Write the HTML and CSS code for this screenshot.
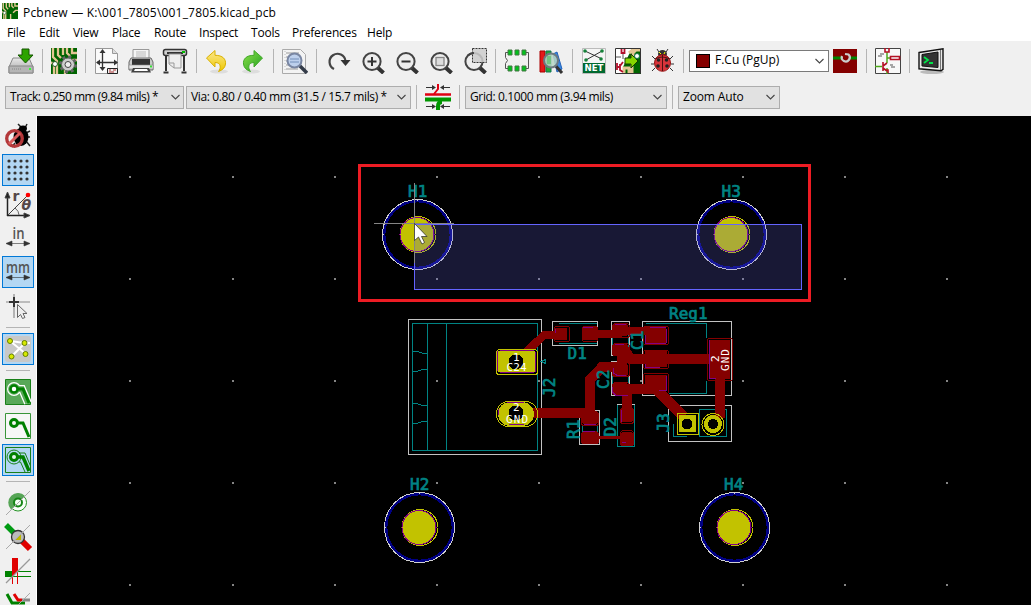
FILE: index.html
```html
<!DOCTYPE html>
<html lang="en">
<head>
<meta charset="utf-8">
<title>Pcbnew</title>
<link rel="stylesheet" href="styles.css">
</head>
<body>
<svg class="defs" width="0" height="0" aria-hidden="true">
  <defs>
    <linearGradient id="gray" x1="0" y1="0" x2="0" y2="1"><stop offset="0" stop-color="#e8e8e8"/><stop offset="1" stop-color="#a5a5a5"/></linearGradient>
    <linearGradient id="green" x1="0" y1="0" x2="1" y2="1"><stop offset="0" stop-color="#8ee04a"/><stop offset="1" stop-color="#20a020"/></linearGradient>
    <linearGradient id="gold" x1="0" y1="0" x2="0" y2="1"><stop offset="0" stop-color="#fbe78e"/><stop offset="1" stop-color="#eec800"/></linearGradient>
    <g id="lens"><path d="M18 19L24.500 25" stroke="#333" stroke-width="4"/><circle cx="13" cy="13.500" r="8.600" fill="#ededed" stroke="#444" stroke-width="2"/></g>
    <g id="board">
      <path fill="#006400" d="M0 0h26v26H0z"/>
      <path d="M2 0v9l4 4v13M7 0v7l3 3M12 0v7M16 0v5l3 3M21 0v5h5M0 14l3 3v9M14 26v-8M26 12h-4l-4 4" stroke="#e3c693" stroke-width="2.300" fill="none"/>
      <circle cx="4" cy="16" r="2.500" fill="#fff" stroke="#245c24"/>
    </g>
    <g id="hole">
      <circle r="35" fill="none" stroke="#d0d0d0"/>
      <circle r="33.300" fill="none" stroke="#000084" stroke-width="2.400"/>
      <circle cx=".5" r="18" fill="none" stroke="#c2c200"/>
      <circle cx="-.5" r="17" fill="#c2c200" stroke="#840084"/>
      <path d="M0-36v2M-36 0h2" stroke="#d0d0d0"/>
    </g>
  </defs>
</svg>

<header class="titlebar">
  <svg class="app-icon" viewBox="0 0 26 26"><use href="#board"/></svg>
  <span class="title">Pcbnew — K:\001_7805\001_7805.kicad_pcb</span>
</header>

<nav class="menubar">
  <span>File</span><span>Edit</span><span>View</span><span>Place</span><span>Route</span><span>Inspect</span><span>Tools</span><span>Preferences</span><span>Help</span>
</nav>

<div class="toolbar main-tools">
  <svg class="tool" viewBox="0 0 26 26"><path d="M5 10h16l4 9v6H1v-6z" fill="url(#gray)" stroke="#888"/><path d="M1 18h24v7H1z" fill="#b5b5b5" stroke="#888"/><path d="M4 21h9" stroke="#888" stroke-dasharray="1 1"/><path d="M21 21h2" stroke="#3f3" stroke-width="2"/><path d="M14 1h7v6h4l-7.500 8L10 7h4z" fill="#2ca300" stroke="#145500"/></svg>
  <i class="sep"></i>
  <svg class="tool" viewBox="0 0 26 26"><use href="#board"/><circle cx="17" cy="16.500" r="7.500" fill="none" stroke="#666" stroke-width="3" stroke-dasharray="2.900 3"/><circle cx="17" cy="16.500" r="6.500" fill="#ccc" stroke="#666"/><circle cx="17" cy="16.500" r="3" fill="#eee" stroke="#444"/></svg>
  <i class="sep"></i>
  <svg class="tool" viewBox="0 0 26 26"><path d="M1.500.500h17l5 5v20h-22z" fill="#fafafa" stroke="#999"/><path d="M18.500.500v5h5" fill="#ddd" stroke="#999"/><path d="M8.500 3v18M3 14.500h20" stroke="#333" stroke-width="1.300"/><path d="M8.500 1l3 4h-6zM8.500 23l3-4h-6zM2 14.500l4-3v6zM24 14.500l-4-3v6z" fill="#333"/><path d="M13.500 20.500h10v5h-10z" fill="#eee" stroke="#222"/><path d="M15 22h2m2 0h3m-7 2h5" stroke="#a33"/></svg>
  <svg class="tool" viewBox="0 0 26 26"><path d="M5 12V1.500h16V12" fill="#f4f4f4" stroke="#999"/><path d="M8 4h10M8 6h10M8 8h10" stroke="#bbb"/><path d="M3 10h20l2 4v8H1v-8z" fill="#ccc" stroke="#666"/><path d="M4 11h18v7H4z" fill="#333"/><path d="M1 17h24v4H1z" fill="#e5e5e5" stroke="#888" stroke-width=".6"/><path d="M5 20h16l2 4.500H3z" fill="#444"/><path d="M7 21h12l1 2H6z" fill="#fff"/><path d="M22 18.500h2" stroke="#3d3" stroke-width="2"/></svg>
  <svg class="tool" viewBox="0 0 26 26"><path d="M4 7v16M22 7v16M1.500 24.500h5M19.500 24.500h5" stroke="#333" stroke-width="2"/><rect x="1.500" y="1.500" width="23" height="6" rx="2" fill="#d0d0d0" stroke="#333" stroke-width="1.500"/><path d="M5 5h16" stroke="#333" stroke-width="2"/><path d="M7 6h12v14H12l-5-4z" fill="#eee" stroke="#999"/><path d="M12 20v-5H7" fill="none" stroke="#999"/><path d="M20 4h3" stroke="#0b0" stroke-width="2"/></svg>
  <i class="sep"></i>
  <svg class="tool" viewBox="0 0 26 26"><ellipse cx="14" cy="23.500" rx="9" ry="2" fill="#ddd"/><path d="M1.500 10L10 2.500v4.800c8 0 11 4 10.500 8.700-.5 4-3 6-7 7.500 2.500-3 3-9-3.500-9v4.500z" fill="url(#gold)" stroke="#d9b100"/></svg>
  <svg class="tool" viewBox="0 0 26 26"><ellipse cx="12" cy="23.500" rx="9" ry="2" fill="#ddd"/><path d="M24.500 10L16 2.500v4.800c-8 0-11 4-10.500 8.700.5 4 3 6 7 7.500-2.500-3-3-9 3.500-9v4.500z" transform="translate(-1 0)" fill="url(#green)" stroke="#42a82a"/></svg>
  <i class="sep"></i>
  <svg class="tool" viewBox="0 0 26 26"><path d="M.500 1.500h18l5 5v19H.500z" fill="#f3f3f3" stroke="#aaa"/><path d="M4 5h13M4 9h3M4 13h2M4 17h3M4 21h12" stroke="#999"/><path d="M3 3v21" stroke="#bbb" stroke-dasharray="1 2"/><path d="M17 17l8 8" stroke="#333b48" stroke-width="3.500"/><circle cx="12.500" cy="12.500" r="7" fill="#bdd0ed" stroke="#7986a2" stroke-width="2"/><path d="M8 11h9M8 14h9" stroke="#728eb9"/></svg>
  <i class="sep"></i>
  <svg class="tool" viewBox="0 0 26 26"><path d="M9 21A8 8 0 1 1 20.500 13" fill="none" stroke="#444" stroke-width="2.200"/><path d="M15.500 12h10l-5 6z" fill="#333"/></svg>
  <svg class="tool" viewBox="0 0 26 26"><use href="#lens"/><path d="M8.500 13.500h9M13 9v9" stroke="#333" stroke-width="2"/></svg>
  <svg class="tool" viewBox="0 0 26 26"><use href="#lens"/><path d="M8.500 13.500h9" stroke="#333" stroke-width="2"/></svg>
  <svg class="tool" viewBox="0 0 26 26"><use href="#lens"/><rect x="9" y="9.500" width="8" height="8" fill="#ddd" stroke="#888" stroke-width="1.300"/></svg>
  <svg class="tool" viewBox="0 0 26 26"><use href="#lens"/><rect x="11.500" y=".5" width="14" height="14" fill="#ccc" fill-opacity=".85" stroke="#333" stroke-dasharray="2 1"/><path d="M7 7.300a8.600 8.600 0 0 1 6-2.400" fill="none" stroke="#444" stroke-width="2"/></svg>
  <i class="sep"></i>
  <svg class="tool" viewBox="0 0 26 26"><path d="M4 4.500H1.500v5l2 3-2 3v5H4M22 4.500h2.500v16H22" fill="none" stroke="#555"/><path d="M4 2h4v5H4zm7 0h4v5h-4zm7 0h4v5h-4zM4 18h4v5H4zm7 0h4v5h-4zm7 0h4v5h-4z" fill="#00c21b" stroke="#474" /></svg>
  <svg class="tool" viewBox="0 0 26 26"><path d="M2 3h5v21H2z" fill="#e51919" stroke="#a00"/><path d="M8 3h5v21H8z" fill="#23a936" stroke="#175"/><path d="M15 6l4-2 5 17-5 3z" fill="#3689e6" stroke="#2461b8"/><path d="M17 17l7 8" stroke="#333" stroke-width="3"/><circle cx="13" cy="12.500" r="7" fill="#b7d6c4" fill-opacity=".85" stroke="#6d7a80" stroke-width="2"/><path d="M11 8v8" stroke="#73c283" stroke-width="4"/></svg>
  <i class="sep"></i>
  <svg class="tool" viewBox="0 0 26 26"><path d="M1.500.500h23v25h-23z" fill="#f5f5f5" stroke="#bbb"/><path d="M4 3l17 8M21 3L5 12" stroke="#333"/><g fill="#16813a"><circle cx="4" cy="3" r="1.800"/><circle cx="21" cy="3" r="1.800"/><circle cx="5" cy="12" r="1.800"/><circle cx="20" cy="11" r="1.800"/></g><path fill="#00692f" d="M2 15h22v10H2z"/><text x="3.500" y="23.300" class="net-label" textLength="19" lengthAdjust="spacingAndGlyphs">NET</text></svg>
  <svg class="tool" viewBox="0 0 26 26"><path fill="#fff" d="M0 0h26v26H0z"/><path d="M17 0h9v26H8v-7z" fill="#006400"/><path d="M14 5l6-5h6v2h-5l-3 3v4M9 25v-5h5v6M17 26V15" stroke="#e3c693" stroke-width="3" fill="none"/><path d="M6.500 1v4h3V1M2 15v7m0-3h3m0-3v6l3 2M8 14l-3 4" fill="none" stroke="#b3102b" stroke-width="1.800"/><path d="M1 9h5M8 6v5" stroke="#555"/><path d="M10 10h6V6l7 7-7 7v-4h-6z" fill="#86d500" stroke="#163a00"/><circle cx="22" cy="8" r="2.500" fill="#fff" stroke="#174"/><path d="M.5.500h25v25H.500z" fill="none" stroke="#333"/></svg>
  <svg class="tool" viewBox="0 0 26 26"><g transform="translate(1 0)"><path d="M9 4L7 1M16 4l2-3M5 11L2 8M20 11l3-3M4 16H1M21 16h3M5 20l-3 3M20 20l3 3" stroke="#333" fill="none"/><ellipse cx="12.500" cy="6" rx="4.500" ry="4" fill="#333"/><ellipse cx="12.500" cy="15" rx="8" ry="8.300" fill="#d8343b" stroke="#971010"/><path d="M12.500 7v16M5 11q7-4 15 0" fill="none" stroke="#501010"/><path d="M9 4l2 2m4-2l-1 2" stroke="#ff0"/><g fill="#222"><circle cx="8.500" cy="12" r="1.800"/><circle cx="16.500" cy="12" r="1.800"/><circle cx="8" cy="18" r="1.800"/><circle cx="17" cy="18" r="1.800"/></g></g></svg>
  <i class="sep"></i>
  <div class="combo layer"><i class="swatch"></i><span>F.Cu (PgUp)</span><svg class="chevron" viewBox="0 0 9 6"><path d="M.5 1l4 4 4-4"/></svg></div>
  <svg class="tool pair" viewBox="0 0 26 26"><path d="M1 1h24v24H1z" fill="#840000"/><path d="M1 10h8M17 10h8" stroke="#008400" stroke-width="3"/><path d="M10 8a4 4 0 1 0 6.500-1.500L13 6" fill="none" stroke="#ccc" stroke-width="2.200"/></svg>
  <i class="sep"></i>
  <svg class="tool" viewBox="0 0 26 26"><path d="M.500.500h25v25H.500z" fill="#f8f8f8" stroke="#444"/><path d="M12 4v11M0 18.500h7M12 10h4M12 20v6" stroke="#4da91b" stroke-width="1.500" fill="none"/><path d="M10 0v4h4V0M15.500 8.500h9v3h-9zM8 14v9m0-5l4-3m-4 5l4 3m-2-1h3v3" fill="none" stroke="#b31224" stroke-width="1.600"/><path d="M5 6h4M3 8h4m8 9h3m-2 2h4" stroke="#555"/></svg>
  <i class="sep"></i>
  <svg class="tool" viewBox="0 0 26 26"><ellipse cx="14" cy="24" rx="12" ry="2" fill="#bbb"/><path d="M1 4.500L25 .8v20.500l-2 1.500-22-2z" fill="#e8e8e8" stroke="#111" stroke-width="1.400"/><path d="M4 6.500l16-2.500v15.500L4 18z" fill="#333" stroke="#111"/><path d="M22.500 2v20" stroke="#777"/><path d="M6 9l4 3-4 3m5 0h4" stroke="#00e54a" stroke-width="1.800" fill="none"/></svg>
</div>

<div class="toolbar option-tools">
  <div class="combo track"><span>Track: 0.250 mm (9.84 mils) *</span><svg class="chevron" viewBox="0 0 9 6"><path d="M.5 1l4 4 4-4"/></svg></div>
  <div class="combo via"><span>Via: 0.80 / 0.40 mm (31.5 / 15.7 mils) *</span><svg class="chevron" viewBox="0 0 9 6"><path d="M.5 1l4 4 4-4"/></svg></div>
  <i class="sep"></i>
  <svg class="tool" viewBox="0 0 26 26"><path d="M0 10.500h26" stroke="#e00012" stroke-width="2.500"/><path d="M13 0v5l-4 5" fill="none" stroke="#e00012" stroke-width="2"/><path d="M0 15.500h26" stroke="#009600" stroke-width="4"/><path d="M17 18q-4 0-4 4v4" fill="none" stroke="#009600" stroke-width="4"/><path d="M1 3.500h8M17 3.500h8M1 22.500h8M17 22.500h8" stroke="#333"/><path d="M11 3.500L7 1v5zM15 3.500L19 1v5zM11 22.500L7 20v5zM15 22.500l4-2.500v5z" fill="#333"/></svg>
  <i class="sep wide-sep"></i>
  <div class="combo grid-size"><span>Grid: 0.1000 mm (3.94 mils)</span><svg class="chevron" viewBox="0 0 9 6"><path d="M.5 1l4 4 4-4"/></svg></div>
  <i class="sep grid-sep"></i>
  <div class="combo zoom"><span>Zoom Auto</span><svg class="chevron" viewBox="0 0 9 6"><path d="M.5 1l4 4 4-4"/></svg></div>
</div>

<main class="workspace">
  <aside class="side-tools">
    <div class="side"><svg viewBox="0 0 26 26"><path d="M13 1l4 4M22 1l-2 4M21 10l4-2M22 14h3M21 18l4 5M10 20l-3 4" stroke="#222" stroke-width="1.500"/><ellipse cx="18" cy="5.500" rx="4" ry="3"/><ellipse cx="16" cy="14" rx="7.500" ry="9"/><circle cx="9.500" cy="15.500" r="7.800" fill="none" stroke="#b3383a" stroke-width="3.300"/><path d="M4 21L15 10" stroke="#d95c5c" stroke-width="3"/></svg></div>
    <div class="side active"><svg viewBox="0 0 26 26"><path d="M4 4h20M4 10h20M4 16h20M4 22h20" stroke="#333" stroke-width="3.200" stroke-linecap="round" stroke-dasharray="0 6"/></svg></div>
    <div class="side"><svg viewBox="0 0 26 26"><path d="M2.500 25V3M2 24.500h21" stroke="#222" stroke-width="1.500"/><path d="M2.500 1L5 7H0zM25 24.500l-6-2.500v5zM3 24L22 5" fill="#222" stroke="#444"/><path d="M10 17q4 3 4 7" fill="none" stroke="#666"/><circle cx="23" cy="4" r="2.300" fill="#f00"/><text x="7.500" y="9.500" class="polar">r</text><text x="16.500" y="19" class="polar theta">θ</text></svg></div>
    <div class="side"><svg viewBox="0 0 26 26"><text x="7.500" y="13.500" class="unit" textLength="12" lengthAdjust="spacingAndGlyphs">in</text><path d="M4 18.500h18M1 18.500l6-2.500v5zM25 18.500l-6-2.500v5z" fill="#333" stroke="#333" stroke-width=".6"/></svg></div>
    <div class="side active"><svg viewBox="0 0 26 26"><text x="1" y="13.500" class="unit" textLength="24" lengthAdjust="spacingAndGlyphs">mm</text><path d="M4 18.500h18M1 18.500l6-2.500v5zM25 18.500l-6-2.500v5z" fill="#333" stroke="#333" stroke-width=".6"/></svg></div>
    <div class="side"><svg viewBox="0 0 26 26"><path d="M1 9h24M9 1v24" stroke="#aaa" stroke-width="1.700"/><path d="M4 9h10M9 4v10" stroke="#333" stroke-width="2"/><path d="M12.500 11.500v13l3-3 2 4 2.500-1-2-4h4z" fill="#eee" stroke="#666"/></svg></div>
    <i class="hsep"></i>
    <div class="side active"><svg viewBox="0 0 26 26"><rect width="26" height="26" rx="3" fill="#c8c8c8"/><path d="M5 5l15 2h5M5 5l16 13M20 7L6 21" stroke="#fff" stroke-width="2"/><g fill="#d7e900" stroke="#668000"><circle cx="5" cy="5" r="2.500"/><circle cx="19.500" cy="7" r="2.500"/><circle cx="6.500" cy="20.500" r="2.500"/><circle cx="20.500" cy="18" r="2.500"/></g></svg></div>
    <i class="hsep"></i>
    <div class="side"><svg viewBox="0 0 26 26"><path d="M.5.500h25v25H.500z" fill="#58a858" stroke="#188018"/><path d="M9 10h8l6 14" stroke="#fff" stroke-width="8" fill="none"/><circle cx="9" cy="10" r="7" fill="#fff"/><path d="M9 10h8l6 14" stroke="#58a858" stroke-width="5.500" fill="none"/><circle cx="9" cy="10" r="5.800" fill="#58a858"/><circle cx="9" cy="10" r="3.500" fill="#fff" stroke="#008000" stroke-width="2.500"/><path d="M12.500 10H18l6 14" stroke="#008000" stroke-width="3" fill="none"/></svg></div>
    <div class="side"><svg viewBox="0 0 26 26"><path d="M.5.500h25v25H.500z" fill="#f7f7f7" stroke="#399539"/><circle cx="9" cy="10" r="3.500" fill="none" stroke="#008000" stroke-width="3"/><path d="M12.500 10H18l6 14" stroke="#008000" stroke-width="3" fill="none"/></svg></div>
    <div class="side active"><svg viewBox="0 0 26 26"><path d="M.5.500h25v25H.500z" fill="none" stroke="#188018"/><circle cx="9" cy="10" r="7" fill="none" stroke="#188018"/><path d="M14 6h6l5.500 13M14 15h1.500l4.500 10" stroke="#188018" fill="none"/><circle cx="9" cy="10" r="3.500" fill="#e3f3ef" stroke="#008000" stroke-width="3"/><path d="M12.500 10H18l6 14" stroke="#008000" stroke-width="3.500" fill="none"/></svg></div>
    <i class="hsep"></i>
    <div class="side"><svg viewBox="0 0 26 26"><circle cx="13" cy="12.500" r="8.500" fill="#f8fff8" stroke="#239323"/><path d="M6 19.500A9 9 0 1 1 20 6z" fill="#56a556"/><circle cx="13" cy="12.500" r="4" fill="#f4fff4" stroke="#158515" stroke-width="2"/><path d="M1 25L25 1" stroke="#aaa"/></svg></div>
    <div class="side"><svg viewBox="0 0 26 26"><path d="M1 1l10 10" stroke="#009b13" stroke-width="5.500"/><path d="M14 14l11 11" stroke="#e00000" stroke-width="6"/><circle cx="13" cy="13" r="6.500" fill="#bbb" stroke="#333" stroke-width="1.300"/><path d="M10 16l6-6v6z" fill="#bdb600"/><path d="M1 25L25 1" stroke="#aaa"/></svg></div>
    <div class="side"><svg viewBox="0 0 26 26"><path d="M0 13h8v6H0z" fill="#008200"/><path d="M8 13.500h18M8 18.500h18" stroke="#008200"/><path d="M7 0h6v13l-6 6z" fill="#e00000"/><path d="M7.500 15v11M12.500 13v13" stroke="#e00000"/><path d="M1 25L25 1" stroke="#999" stroke-width="1.300"/></svg></div>
    <div class="side"><svg viewBox="0 0 26 26"><path d="M2 2l5 9h13" stroke="#008200" stroke-width="3" fill="none"/><path d="M9 2l4 6h4" stroke="#e00000" stroke-width="3" fill="none"/><path d="M17 8h8" stroke="#888" stroke-width="3"/><path d="M1 25L25 1" stroke="#aaa"/></svg></div>
  </aside>

  <svg class="pcb" viewBox="37 116 994 489" shape-rendering="crispEdges">
    <!-- grid dots -->
    <g class="dots">
      <path d="M129 177h2M232 177h2M334 177h2M436 177h2M538 177h2M640 177h2M742 177h2M844 177h2M946 177h2"/>
      <path d="M129 279h2M232 279h2M334 279h2M436 279h2M538 279h2M640 279h2M742 279h2M844 279h2M946 279h2"/>
      <path d="M129 381h2M232 381h2M334 381h2M436 381h2M538 381h2M640 381h2M742 381h2M844 381h2M946 381h2"/>
      <path d="M129 483h2M232 483h2M334 483h2M436 483h2M538 483h2M640 483h2M742 483h2M844 483h2M946 483h2"/>
      <path d="M129 585h2M232 585h2M334 585h2M436 585h2M538 585h2M640 585h2M742 585h2M844 585h2M946 585h2"/>
    </g>

    <!-- mounting holes -->
    <use href="#hole" x="417.500" y="234.500"/>
    <use href="#hole" x="731.500" y="234.500"/>
    <use href="#hole" x="419.500" y="527.500"/>
    <use href="#hole" x="734.500" y="527.500"/>

    <!-- courtyards and silkscreen -->
    <path class="courtyard" d="M408.500 319.500h133v135h-133zM552.500 321.500h45v24h-45zM611.500 321.500h18v34h-18zM611.500 361.500h18v34h-18zM642.500 321.500h89v74h-89zM579.500 410.500h20v34h-20zM617.500 404.500h17v42h-17zM668.500 405.500h63v36h-63z"/>
    <path class="silk" d="M412.500 323.500h125v127h-125zM427.500 323.500v127M446.500 323.500v127M412 351.500h5l5 1.500h5M412 371.500h5l5-2h5M412 403.500h5l5 2h5M412 423.500h5l5-2h5M545.500 359.500v4l-4-2z"/>
    <path class="silk" d="M559 323.500h38M559 343.500h38M612.500 335v18M628.500 335v18M612.500 375v10M628.500 375v10M646 323.500h60.500v14M706.500 381v12h-38M582.500 424v8M597.500 424v8M617.500 404.500v42h17v-42M673.500 424v12.500h13M699.500 409.500h27v27h-27z"/>

    <!-- copper tracks -->
    <g class="tracks">
      <path d="M526 352l18-17H565M588 334h30l6-3h36" stroke-width="8"/>
      <path d="M622 347l9 12h84M720 370v48M656 389l28 28M624 389h32M530 413h65M590 418v-38l12-13h24M627 390v24M622 350v20" stroke-width="10"/>
      <path stroke-width="3" d="M597 437.500h25"/>
    </g>

    <!-- SMD pads -->
    <g class="pads">
      <path d="M555 328h12v12h-12zM583 327h14v13h-14z"/>
      <rect x="613" y="324" width="15" height="12" rx="3"/><rect x="613" y="344" width="15" height="12" rx="3"/>
      <rect x="613" y="364" width="15" height="12" rx="3"/><rect x="613" y="383" width="15" height="12" rx="3"/>
      <path d="M645 327h21v16h-21zM645 351h22v16h-22zM645 375h22v16h-22zM709 340h21v39h-21z"/>
      <rect x="582" y="412" width="16" height="12" rx="3"/><rect x="582" y="432" width="16" height="11" rx="3"/>
      <rect x="621" y="408" width="12" height="14" rx="3"/><rect x="621" y="432" width="12" height="13" rx="3"/>
    </g>
    <g class="pad-outline">
      <rect x="554.500" y="326.500" width="15" height="15" rx="2"/><rect x="582.500" y="326.500" width="15" height="15" rx="2"/>
      <rect x="612.500" y="323.500" width="17" height="14" rx="3"/><rect x="612.500" y="343.500" width="17" height="12" rx="3"/>
      <rect x="612.500" y="362.500" width="17" height="14" rx="3"/><rect x="612.500" y="382.500" width="17" height="12" rx="3"/>
      <rect x="643.500" y="326.500" width="25" height="18" rx="2"/><rect x="643.500" y="350.500" width="25" height="18" rx="2"/><rect x="643.500" y="373.500" width="25" height="20" rx="2"/>
      <rect x="707.500" y="338.500" width="25" height="42" rx="2"/>
      <rect x="581.500" y="411.500" width="17" height="14" rx="3"/><rect x="581.500" y="431.500" width="17" height="12" rx="3"/>
      <rect x="620.500" y="407.500" width="13" height="16" rx="3"/><rect x="620.500" y="430.500" width="13" height="15" rx="3"/>
    </g>
    <path class="mask" d="M555.500 329v4M583 327.500h10M615 324.500h11M615 344.500h9M613.500 368v5l3 2h9M612.500 387v5l3 3h12M645.500 335v8.500h20M645.500 364v3.500h14M666.500 329v14M650 327.500h16M709.500 340v38.500h6M584 424.500h12M583 431.500h12M621.500 410v12M621.500 442h4M666.500 376v14.500h-8"/>

    <!-- through-hole pads -->
    <rect x="497.500" y="350.500" width="38" height="22" rx="2" fill="#c2c200"/>
    <path class="mask" d="M497.500 351v20M500 350.500h34M500 372.500h34M535.500 352v20"/>
    <rect class="ring" x="496.500" y="349.500" width="41" height="25" rx="3"/>
    <rect x="498" y="402" width="36" height="24" rx="12" fill="#c2c200"/>
    <rect class="ring" x="496.500" y="401.500" width="41" height="25" rx="12"/>
    <path class="mask" d="M507 402.500h17M509 424.500h15M498.500 409v6"/>
    <circle cx="516" cy="362" r="7.500"/><circle cx="516" cy="413" r="7.500"/>
    <path d="M679 415h17v17h-17z" fill="#c2c200"/><circle cx="687" cy="424" r="5.500"/><path class="ring" d="M677.500 413.500h21v21h-21z"/>
    <circle cx="713" cy="424" r="7" fill="#000" stroke="#c2c200" stroke-width="4"/><circle class="ring" cx="713" cy="424.500" r="11"/>

    <!-- reference designators -->
    <g class="refs">
      <text x="408" y="197">H1</text><text x="721.500" y="197">H3</text><text x="410" y="490">H2</text><text x="724" y="490">H4</text>
      <text x="669" y="319">Reg1</text><text x="567.500" y="359">D1</text>
      <text transform="translate(555 397) rotate(-90)">J2</text>
      <text transform="translate(643 350) rotate(-90)">C1</text>
      <text transform="translate(609 389) rotate(-90)">C2</text>
      <text transform="translate(579 439) rotate(-90)">R1</text>
      <text transform="translate(616 436.500) rotate(-90)">D2</text>
      <text transform="translate(668.500 432.500) rotate(-90)">J3</text>
    </g>
    <g class="pad-text">
      <text x="513" y="361">1</text><text x="506.500" y="371" textLength="20">C24</text>
      <text x="513" y="411">2</text><text x="506" y="423" textLength="22">GND</text>
      <text transform="translate(719 362) rotate(-90)">2</text>
      <text transform="translate(729 371) rotate(-90)" textLength="22">GND</text>
    </g>

    <!-- rubber-band selection, highlight frame and pointer -->
    <rect x="414.500" y="224.500" width="387" height="65" fill="#6464dc" fill-opacity=".24"/>
    <rect x="414.500" y="224.500" width="387" height="65" fill="none" stroke="#6464ff"/>
    <path d="M374 223.500h80M414.500 183v80" stroke="#858585"/>
    <rect x="359.500" y="165.500" width="450" height="135" fill="none" stroke="#ed1c24" stroke-width="3"/>
    <path d="M414.500 223.500v17l4-3.500 3.500 7 2.500-1.500-3-6h5.500z" fill="#fff" stroke="#222" stroke-width=".7" shape-rendering="auto"/>
  </svg>
</main>
</body>
</html>
```
FILE: styles.css
```css
* { box-sizing: border-box; }

body {
  margin: 0;
  width: 1031px;
  height: 605px;
  overflow: hidden;
  display: flex;
  flex-direction: column;
  background: #f0f0f0;
  color: #000;
  font: 12px/16px "Open Sans", "Noto Sans", sans-serif;
  white-space: nowrap;
}

.defs { position: absolute; }

svg { display: block; flex: none; }

.titlebar {
  flex: none;
  height: 24px;
  display: flex;
  align-items: center;
  gap: 5px;
  padding-left: 2px;
  background: #fff;
}

.app-icon { width: 16px; height: 16px; margin-bottom: 2px; }

.title { padding-top: 2px; letter-spacing: 0.19px; }

.menubar {
  flex: none;
  height: 17px;
  display: grid;
  grid-template-columns: 32px 34px 39px 42px 45px 52px 41px 75px 40px;
  padding: 1px 0 0 7px;
  background: #fff;
  letter-spacing: -0.2px;
}

.toolbar {
  flex: none;
  display: flex;
  align-items: center;
  background: #f0f0f0;
}

.main-tools { height: 41px; padding: 0 0 1px 4px; }

.option-tools { height: 34px; padding: 0 0 4px 5px; }

.tool { width: 26px; height: 26px; margin: 0 4px; }

.sep {
  flex: none;
  width: 1px;
  height: 24px;
  margin: 0 4px;
  background: #b4b4b4;
}

.combo {
  flex: none;
  height: 23px;
  display: flex;
  align-items: center;
  justify-content: space-between;
  padding: 0 7px 0 4px;
  border: 1px solid #adadad;
  background: #e1e1e1;
  letter-spacing: -0.37px;
}

.layer {
  width: 140px;
  height: 22px;
  margin: 0 1px;
  padding: 0 4px 0 6px;
  border-color: #7a7a7a;
  background: #fff;
  letter-spacing: 0;
}

.layer span { flex: 1; margin-top: -2px; }

.swatch {
  width: 14px;
  height: 14px;
  margin-right: 5px;
  border: 1px solid #000;
  background: #840000;
}

.pair { margin: 0 4px 0 2px; }

.track { width: 179px; margin-right: 2px; padding-right: 3px; letter-spacing: -0.48px; }
.via { width: 225px; margin-right: 1px; padding-right: 4px; }
.wide-sep { margin-right: 5px; }
.grid-size { width: 202px; padding-right: 4px; }
.grid-sep { margin: 0 5px; }
.zoom { width: 102px; padding-right: 4px; letter-spacing: -0.15px; }

.chevron { width: 9px; height: 6px; }

.chevron path { fill: none; stroke: #444; stroke-width: 1.1; }

.workspace { flex: none; display: flex; height: 489px; }

.side-tools {
  width: 37px;
  padding: 3px 0 0 1px;
  border-right: 1px solid #fff;
  overflow: hidden;
}

.side {
  width: 32px;
  height: 32px;
  margin: 1px 1px 2px;
  display: grid;
  place-items: center;
}

.side svg { width: 26px; height: 26px; overflow: visible; }

.active { background: #b3d7f3; box-shadow: inset 0 0 0 1px #0078d7; }

.hsep {
  display: block;
  width: 24px;
  height: 1px;
  margin: 5px;
  background: #b4b4b4;
}

.pcb { width: 994px; height: 489px; background: #000; }

.dots { stroke: #848484; stroke-width: 2; }
.courtyard { fill: none; stroke: #c2c2c2; }
.silk { fill: none; stroke: #008484; }
.tracks { fill: none; stroke: #840000; }
.pads { fill: #840000; }
.pad-outline { fill: none; stroke: #840000; }
.mask { fill: none; stroke: #840084; }
.ring { fill: none; stroke: #c2c200; }

.refs { fill: #008484; font: 16px "DejaVu Sans Mono", monospace; stroke: #008484; stroke-width: .7; }
.pad-text { fill: #fff; font: 11px "DejaVu Sans Mono", monospace; }

.net-label { fill: #fff; font: bold 9px "DejaVu Sans", sans-serif; }
.polar { fill: #554848; font: bold 14px "DejaVu Sans", sans-serif; }
.theta { font-style: italic; }
.unit { fill: #555; font: 600 17px "Open Sans", sans-serif; }
```
